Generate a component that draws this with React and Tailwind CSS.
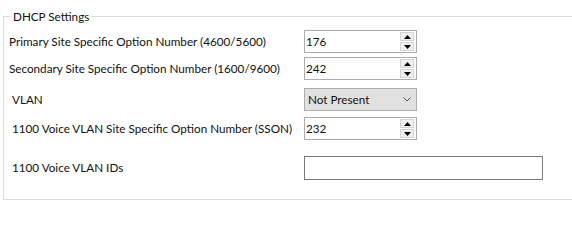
import { useState } from 'react';

function Spinner({ value }) {
  return (
    <div className="flex items-center w-[113px] h-[23px] border border-[#acacac] bg-white">
      <span className="flex-1 pl-[1px] leading-none">{value}</span>
      <div className="flex flex-col w-[14px] h-[19px] mr-[2px] gap-[1px]">
        <button className="flex-1 flex items-center justify-center bg-[#f0f0f0] border border-[#d4d4d4]">
          <svg width="7" height="4" viewBox="0 0 7 4"><path d="M0 4 L3.5 0 L7 4 Z" fill="#000" /></svg>
        </button>
        <button className="flex-1 flex items-center justify-center bg-[#f0f0f0] border border-[#d4d4d4]">
          <svg width="7" height="4" viewBox="0 0 7 4"><path d="M0 0 L7 0 L3.5 4 Z" fill="#000" /></svg>
        </button>
      </div>
    </div>
  );
}

function Row({ label, indent, gap, children }) {
  return (
    <div className={`flex items-center h-[23px] ${gap}`}>
      <div className={`w-[300px] shrink-0 whitespace-nowrap ${indent}`}>{label}</div>
      {children}
    </div>
  );
}

export default function App() {
  const [vlan] = useState('Not Present');

  return (
    <div className="w-[572px] h-[206px] bg-white overflow-hidden font-['Lato',sans-serif] text-[11.7px] text-[#111]">
      <div className="relative mt-[16px] ml-[3px] w-[620px] h-[184px] border border-[#dcdcdc] pt-[13px]">
        <span className="absolute -top-[9px] left-[7px] px-[2px] bg-white leading-[16px]">DHCP Settings</span>

        <Row label="Primary Site Specific Option Number (4600/5600)" indent="pl-[5px]" gap="">
          <Spinner value="176" />
        </Row>
        <Row label="Secondary Site Specific Option Number (1600/9600)" indent="pl-[5px]" gap="mt-[4px]">
          <Spinner value="242" />
        </Row>
        <Row label="VLAN" indent="pl-[8px]" gap="mt-[8px]">
          <div className="flex items-center justify-between w-[113px] h-[23px] border border-[#adadad] bg-[#e1e1e1] pl-[3px] pr-[5px]">
            <span>{vlan}</span>
            <svg width="8" height="5" viewBox="0 0 8 5"><path d="M0.5 0.5 L4 4 L7.5 0.5" fill="none" stroke="#555" strokeWidth="1" /></svg>
          </div>
        </Row>
        <Row label="1100 Voice VLAN Site Specific Option Number (SSON)" indent="pl-[8px]" gap="mt-[6px]">
          <Spinner value="232" />
        </Row>
        <Row label="1100 Voice VLAN IDs" indent="pl-[8px]" gap="mt-[16px]">
          <div className="w-[239px] h-[24px] border border-[#7a7a7a] bg-white" />
        </Row>
      </div>
    </div>
  );
}
